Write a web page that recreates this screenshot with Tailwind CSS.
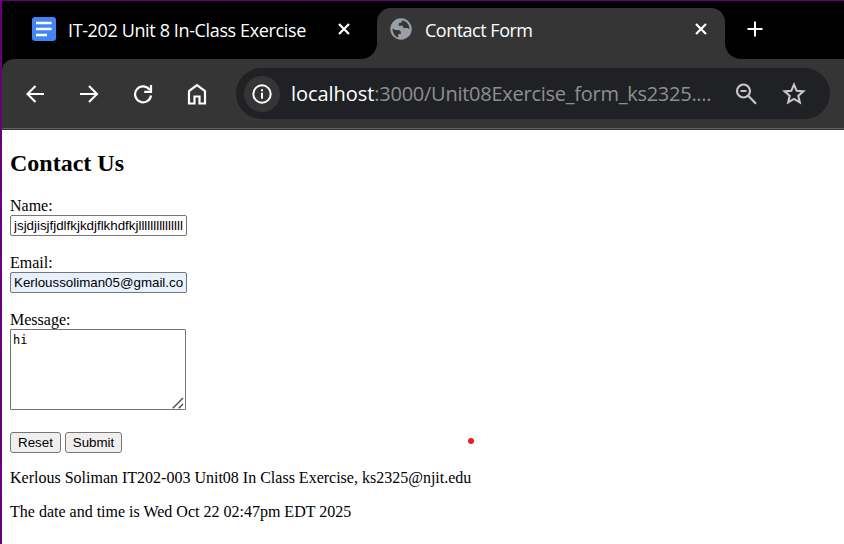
<!DOCTYPE html>
<html lang="en">
<head>
<meta charset="utf-8">
<title>Contact Form</title>
<script src="https://cdn.jsdelivr.net/npm/@tailwindcss/browser@4"></script>
</head>
<body class="h-[544px] w-[844px] overflow-hidden border-t border-l-2 border-[#68007d] bg-white">
<div class="flex h-[129px] flex-col bg-black font-['Open_Sans',sans-serif] text-white">
  <div class="h-[7px] shrink-0 bg-black"></div>
  <div class="flex h-[51px] shrink-0 bg-[#353535]">
    <div class="flex w-[375px] shrink-0 items-center rounded-br-[16px] bg-black pb-[9px] pl-[30px]">
      <svg class="h-6 w-6 shrink-0" viewBox="0 0 24 24"><rect width="24" height="24" rx="3" fill="#4285f4"/><path d="M4 6h15.500M4 12h15.500M4 18h11" stroke="#fff" stroke-width="2.600"/></svg>
      <span class="ml-3 w-[240px] shrink-0 pt-[2px] text-[18px] leading-6 tracking-[-0.37px] whitespace-nowrap">IT-202 Unit 8 In-Class Exercise</span>
      <svg class="ml-[30px] h-[12px] w-[12px] shrink-0" viewBox="0 0 12 12"><path d="M1 1l10 10M11 1L1 11" stroke="#fff" stroke-width="2.200"/></svg>
    </div>
    <div class="w-[348px] shrink-0 bg-black">
      <div class="flex h-full items-center rounded-t-[14px] bg-[#353535] pb-[9px] pl-[13px]">
        <svg class="h-[22px] w-[22px] shrink-0" viewBox="0 0 22 22"><circle cx="11" cy="11" r="10.700" fill="#9aa0a6"/><path d="M2.600 10.600L5.500 12.100h2.300q3 0 3 2.700v1.300h-2.500v3.500C4.500 18.500 2.300 14.600 2.600 10.600zM11.700 2.400c5 .3 8.200 4.600 7.700 9.200-.8-1-1.600-1.500-2.800-1.500h-2.100c-1 0-1.500-.8-1.700-2.300H8.700V6.200c0-1 .7-1.500 1.700-1.500h1.300z" fill="#353535"/></svg>
        <span class="ml-[13px] w-[110px] shrink-0 pt-[2px] text-[18px] leading-6 tracking-[-0.5px] whitespace-nowrap">Contact Form</span>
        <svg class="ml-[160px] h-[12px] w-[12px] shrink-0" viewBox="0 0 12 12"><path d="M1 1l10 10M11 1L1 11" stroke="#fff" stroke-width="2.200"/></svg>
      </div>
    </div>
    <div class="flex flex-1 items-center rounded-bl-[16px] bg-black pb-[9px] pl-[22px]">
      <svg class="h-4 w-4" viewBox="0 0 16 16"><path d="M8 .5v15M.5 8h15" stroke="#fff" stroke-width="2"/></svg>
    </div>
  </div>
  <div class="flex h-[71px] shrink-0 items-center rounded-tl-[12px] border-b border-[#353535] bg-[#353535] pb-px shadow-[inset_0_-1px_0_#626262]">
    <svg class="ml-[24px] h-[18px] w-[19px] shrink-0" viewBox="0 0 19 18" fill="none" stroke="#fff" stroke-width="2.100"><path d="M18 9H2M9.500 1L1.500 9l8 8"/></svg>
    <svg class="ml-[35px] h-[18px] w-[19px] shrink-0" viewBox="0 0 19 18" fill="none" stroke="#fff" stroke-width="2.100"><path d="M0 9h16.500M9 1l8 8-8 8"/></svg>
    <svg class="ml-[34px] h-[20px] w-[20px] shrink-0" viewBox="0 0 20 20" fill="none" stroke="#fff" stroke-width="2.200"><path d="M16.800 6A8 8 0 1 0 18 11.500M18 1v6.800h-6.800"/></svg>
    <svg class="ml-[34px] h-[22px] w-[20px] shrink-0" viewBox="0 0 20 22" fill="none" stroke="#fff" stroke-width="2.200"><path d="M2 20.500V8L10 2l8 6v12.500h-5.500v-7h-5v7z"/></svg>
    <div class="ml-[29px] flex h-[51px] w-[594px] shrink-0 items-center rounded-full bg-[#202124] pl-[8px]">
      <div class="flex h-9 w-9 shrink-0 items-center justify-center rounded-full bg-[#353535]">
        <svg class="h-5 w-5" viewBox="0 0 20 20" fill="none" stroke="#fff" stroke-width="2"><circle cx="10" cy="10" r="8.700"/><path d="M10 8.800v6M10 5.200v2"/></svg>
      </div>
      <span class="ml-[11px] w-[425px] shrink-0 text-[20px] leading-7 tracking-[-0.26px] whitespace-nowrap text-[#8e8f91]"><span class="tracking-[-0.05px] text-white">localhost</span>:3000/Unit08Exercise_form_ks2325....</span>
      <svg class="ml-[19px] h-[22px] w-[22px] shrink-0" viewBox="0 0 22 22" fill="none" stroke="#c7c7c7" stroke-width="2.200"><circle cx="8.500" cy="8" r="6.500"/><path d="M5.500 8h6M13 12.500l8 8.200"/></svg>
      <svg class="ml-[25px] h-[23px] w-[24px] shrink-0" viewBox="0 0 24 23" fill="none" stroke="#c7c7c7" stroke-width="2.100"><path d="M12 2.700l2.700 6.100 6.700.6-5.100 4.400 1.500 6.500L12 16.900l-5.800 3.400 1.500-6.500-5.100-4.400 6.700-.6z"/></svg>
    </div>
  </div>
</div>
<main class="relative px-2 pt-[19px] font-['Liberation_Serif',serif] text-[16px] leading-[18px] text-black">
  <h2 class="text-[24px] leading-7 font-bold">Contact Us</h2>
  <form class="mt-5">
    <label class="block" for="name">Name:</label>
    <input id="name" class="block h-[21px] w-[177px] rounded-[2px] border border-[#767676] bg-white px-[3px] font-['Liberation_Sans',sans-serif] text-[13.333px] leading-[15px]" value="jsjdjisjfjdlfkjkdjflkhdfkjlllllllllllllll">
    <label class="mt-[18px] block" for="email">Email:</label>
    <input id="email" class="block h-[21px] w-[177px] rounded-[2px] border border-[#767676] bg-[#e8f0fe] px-[3px] font-['Liberation_Sans',sans-serif] text-[13.333px] leading-[15px]" value="Kerloussoliman05@gmail.com">
    <label class="mt-[18px] block" for="message">Message:</label>
    <div class="relative h-[81px] w-[176px]">
      <textarea id="message" class="block h-[81px] w-[176px] resize-none rounded-[1px] border border-[#767676] bg-white px-[2px] pt-[3px] font-['DejaVu_Sans_Mono',monospace] text-[12px] leading-[15px]">hi</textarea>
      <svg class="absolute right-[2px] bottom-[1px] h-3 w-3" viewBox="0 0 12 12"><path d="M.8 11.200L11 1M6.800 11.200L11 7" stroke="#4a4a4a" stroke-width="1.400"/></svg>
    </div>
    <div class="mt-[22px] flex gap-1 font-['Liberation_Sans',sans-serif] text-[13.333px] leading-[15px]">
      <button type="reset" class="h-[21px] w-[51px] rounded-[3px] border border-[#767676] bg-[#efefef]">Reset</button>
      <button type="button" class="h-[21px] w-[57px] rounded-[3px] border border-[#767676] bg-[#efefef]">Submit</button>
    </div>
  </form>
  <p class="mt-4 whitespace-nowrap">Kerlous Soliman IT202-003 Unit08 In Class Exercise, ks2325@njit.edu</p>
  <p class="mt-4 whitespace-nowrap">The date and time is Wed Oct 22 02:47pm EDT 2025</p>
  <span class="absolute top-[308px] left-[466px] h-[6px] w-[6px] rounded-full bg-[#ed1c24]"></span>
</main>
</body>
</html>
